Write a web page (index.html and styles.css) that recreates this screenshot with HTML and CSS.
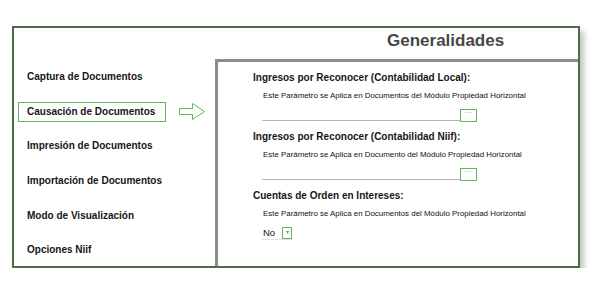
FILE: index.html
```html
<!DOCTYPE html>
<html lang="es">
<head>
<meta charset="utf-8">
<title>Generalidades</title>
<link rel="stylesheet" href="styles.css">
</head>
<body>
<div class="frame">
  <nav class="menu">
    <div class="item">Captura de Documentos</div>
    <div class="item-row">
      <div class="item active">Causación de Documentos</div>
      <svg class="arrow" width="27" height="17" viewBox="0 0 27 17">
        <path d="M0.5 5.5 H13.5 V0.5 L25.5 8.5 L13.5 16.5 V11.5 H0.5 Z" fill="#fff" stroke="#5cb85c" stroke-width="1"/>
      </svg>
    </div>
    <div class="item">Impresión de Documentos</div>
    <div class="item">Importación de Documentos</div>
    <div class="item">Modo de Visualización</div>
    <div class="item">Opciones Niif</div>
  </nav>
  <section class="main">
    <header class="title">Generalidades</header>
    <div class="panel">
      <div class="field">
        <h3 class="label">Ingresos por Reconocer (Contabilidad Local):</h3>
        <p class="hint">Este Parámetro se Aplica en Documentos del Módulo Propiedad Horizontal</p>
        <div class="picker"><span class="line"></span><span class="btn">···</span></div>
      </div>
      <div class="field">
        <h3 class="label">Ingresos por Reconocer (Contabilidad Niif):</h3>
        <p class="hint">Este Parámetro se Aplica en Documento del Módulo Propiedad Horizontal</p>
        <div class="picker"><span class="line"></span><span class="btn">···</span></div>
      </div>
      <div class="field last">
        <h3 class="label">Cuentas de Orden en Intereses:</h3>
        <p class="hint">Este Parámetro se Aplica en Documentos del Módulo Propiedad Horizontal</p>
        <div class="select"><span class="value">No</span><span class="drop">▾</span></div>
      </div>
    </div>
  </section>
</div>
</body>
</html>
```

FILE: styles.css
```css
html, body {
  margin: 0;
  padding: 0;
  background: #fff;
}

body {
  font-family: "Liberation Sans", Arial, sans-serif;
  color: #161616;
}

.frame {
  margin: 26px 0 0 12px;
  width: 568px;
  height: 242px;
  box-sizing: border-box;
  border: 2px solid #4f6a48;
  box-shadow: 4px 5px 6px rgba(90, 120, 70, 0.4);
  display: grid;
  grid-template-columns: 201px 1fr;
  background: #fff;
}

.menu {
  padding: 39px 0 0 4px;
  display: flex;
  flex-direction: column;
  gap: 14.7px;
}

.item-row {
  display: flex;
  align-items: center;
  gap: 13px;
}

.item {
  width: 148px;
  height: 20px;
  box-sizing: border-box;
  padding-left: 9px;
  font-size: 10px;
  font-weight: bold;
  line-height: 20px;
  white-space: nowrap;
}

.item.active {
  border: 1px solid #5cb85c;
  padding-left: 8px;
  line-height: 18px;
}

.arrow {
  display: block;
  margin-top: -1px;
}

.main {
  display: flex;
  flex-direction: column;
}

.title {
  height: 31px;
  box-sizing: border-box;
  padding: 3px 0 0 172px;
  font-size: 17px;
  font-weight: bold;
  line-height: 20px;
  color: #474747;
}

.panel {
  flex: 1;
  border-top: 3px solid #8c8c8c;
  border-left: 3px solid #8c8c8c;
  padding: 10px 0 0 35px;
}

.field {
  margin-bottom: 9px;
}

.label {
  margin: 0;
  font-size: 10px;
  font-weight: bold;
  line-height: 12px;
  white-space: nowrap;
}

.hint {
  margin: 7px 0 0 10px;
  font-size: 7.9px;
  line-height: 10px;
  white-space: nowrap;
  color: #111;
}

.picker {
  margin: 8px 0 0 9px;
  width: 215px;
  height: 13px;
  display: flex;
  align-items: flex-end;
}

.line {
  flex: 1;
  height: 1px;
  background: #b4b4b4;
  margin-bottom: 1px;
}

.btn {
  width: 17px;
  height: 13px;
  box-sizing: border-box;
  border: 1px solid #5cb85c;
  font-size: 7px;
  line-height: 6px;
  color: #8a8a8a;
  text-align: center;
}

.select {
  margin: 8px 0 0 9px;
  width: 30px;
  height: 12px;
  display: flex;
  align-items: center;
  justify-content: space-between;
  border-bottom: 1px solid #e2e2e2;
}

.value {
  padding-left: 1px;
  font-size: 9.5px;
  line-height: 12px;
}

.drop {
  width: 10px;
  height: 12px;
  box-sizing: border-box;
  border: 1px solid #5cb85c;
  font-size: 6px;
  line-height: 9px;
  color: #888;
  text-align: center;
}
```
